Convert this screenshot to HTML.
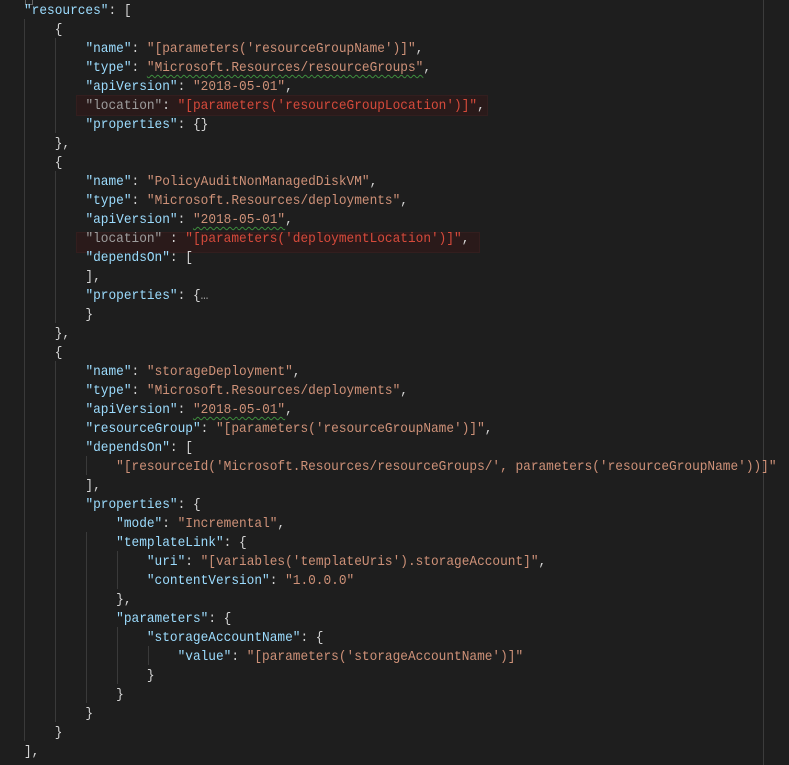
<!DOCTYPE html>
<html><head><meta charset="utf-8"><style>
body{margin:0;background:#1e1e1e;width:789px;height:765px;overflow:hidden;position:relative}
pre{margin:0;position:absolute;left:24px;top:2px;font-family:"Liberation Mono",monospace;font-size:14px;line-height:19px;color:#d4d4d4;transform:scaleX(0.914);transform-origin:0 0}
.k{color:#9cdcfe}.s{color:#ce9178}.g{color:#9d9d9d}.r{color:#d64a3b}
.sq{text-decoration:underline wavy #3f8f3f;text-decoration-thickness:1px;text-underline-offset:3px}
.hl{position:absolute;height:19px;background:#2a1a1a;border:1px solid #331e1e}
.guide{position:absolute;width:1px;background:#3a3a3a}
</style></head><body>
<div style="position:absolute;left:25px;top:0;width:6px;height:4px;border:1px solid #666;border-top:none"></div>
<div class="hl" style="left:76px;top:95px;width:410px"></div>
<div class="hl" style="left:76px;top:232px;width:402px"></div>
<div class="guide" style="left:24px;top:19px;height:722px"></div>
<div class="guide" style="left:55px;top:38px;height:95px"></div>
<div class="guide" style="left:55px;top:171px;height:152px"></div>
<div class="guide" style="left:55px;top:361px;height:361px"></div>
<div class="guide" style="left:86px;top:456px;height:19px"></div>
<div class="guide" style="left:86px;top:532px;height:171px"></div>
<div class="guide" style="left:117px;top:551px;height:38px"></div>
<div class="guide" style="left:117px;top:627px;height:57px"></div>
<div class="guide" style="left:148px;top:646px;height:19px"></div>
<div class="guide" style="left:763px;top:0;height:765px;background:#3c3c3c"></div>
<pre><span class="k">"resources"</span>: [
    {
        <span class="k">"name"</span>: <span class="s">"[parameters('resourceGroupName')]"</span>,
        <span class="k">"type"</span>: <span class="s sq">"Microsoft.Resources/resourceGroups"</span>,
        <span class="k">"apiVersion"</span>: <span class="s">"2018-05-01"</span>,
        <span class="g">"location"</span>: <span class="r">"[parameters('resourceGroupLocation')]"</span>,
        <span class="k">"properties"</span>: {}
    },
    {
        <span class="k">"name"</span>: <span class="s">"PolicyAuditNonManagedDiskVM"</span>,
        <span class="k">"type"</span>: <span class="s">"Microsoft.Resources/deployments"</span>,
        <span class="k">"apiVersion"</span>: <span class="s sq">"2018-05-01"</span>,
        <span class="g">"location"</span> : <span class="r">"[parameters('deploymentLocation')]"</span>,
        <span class="k">"dependsOn"</span>: [
        ],
        <span class="k">"properties"</span>: {<span class="g">…</span>
        }
    },
    {
        <span class="k">"name"</span>: <span class="s">"storageDeployment"</span>,
        <span class="k">"type"</span>: <span class="s">"Microsoft.Resources/deployments"</span>,
        <span class="k">"apiVersion"</span>: <span class="s sq">"2018-05-01"</span>,
        <span class="k">"resourceGroup"</span>: <span class="s">"[parameters('resourceGroupName')]"</span>,
        <span class="k">"dependsOn"</span>: [
            <span class="s">"[resourceId('Microsoft.Resources/resourceGroups/', parameters('resourceGroupName'))]"</span>
        ],
        <span class="k">"properties"</span>: {
            <span class="k">"mode"</span>: <span class="s">"Incremental"</span>,
            <span class="k">"templateLink"</span>: {
                <span class="k">"uri"</span>: <span class="s">"[variables('templateUris').storageAccount]"</span>,
                <span class="k">"contentVersion"</span>: <span class="s">"1.0.0.0"</span>
            },
            <span class="k">"parameters"</span>: {
                <span class="k">"storageAccountName"</span>: {
                    <span class="k">"value"</span>: <span class="s">"[parameters('storageAccountName')]"</span>
                }
            }
        }
    }
],
</pre>
</body></html>
